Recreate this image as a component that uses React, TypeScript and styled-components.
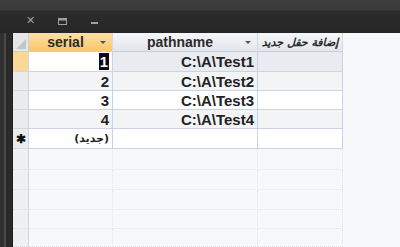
import React from "react";
import styled, { createGlobalStyle } from "styled-components";

const Global = createGlobalStyle`
    html, body {
        margin: 0;
        padding: 0;
        width: 400px;
        height: 247px;
        overflow: hidden;
        background: #f7f8fa;
        font-family: "Liberation Sans", Arial, sans-serif;
    }
`;

const Page = styled.div`
    width: 400px;
    height: 247px;
    display: flex;
    flex-direction: column;
`;

const TitleBar = styled.div`
    height: 33px;
    flex: none;
    background: linear-gradient(#3e3e3e 0, #3a3a3a 10px, #2c2c2c 11px, #262626 100%);
    display: flex;
    align-items: flex-end;
    padding: 0 0 8px 26px;
    box-sizing: border-box;
    gap: 23px;
`;

const Body = styled.div`
    flex: 1;
    display: flex;
    min-height: 0;
`;

const LeftEdge = styled.div`
    width: 13px;
    flex: none;
    background: linear-gradient(
        90deg,
        #303030 0,
        #303030 4px,
        #4a4a4a 4px,
        #4a4a4a 6px,
        #2a2a2a 6px,
        #2a2a2a 12px,
        #1e1e1e 12px
    );
`;

const Sheet = styled.div`
    flex: 1;
    display: grid;
    grid-template-columns: 16px 84px 145px 85px;
    grid-template-rows: 19px 20px 19px 19px 19px 20px 21px 20px 20px 19px 18px;
    align-content: start;
    background: #f7f8fa;
`;

const HeadCell = styled.div<{ $active?: boolean; $arabic?: boolean }>`
    box-sizing: border-box;
    display: flex;
    align-items: center;
    justify-content: center;
    position: relative;
    border-right: 1px solid #d5d9e0;
    border-bottom: 1px solid #c9cdd4;
    background: ${(p) =>
        p.$active
            ? "linear-gradient(#fde0a6, #f8c66c)"
            : "linear-gradient(#f6f7f9, #e2e5ea)"};
    color: #2b2b2b;
    font-weight: bold;
    font-size: ${(p) => (p.$arabic ? "11px" : "14px")};
    font-style: ${(p) => (p.$arabic ? "italic" : "normal")};
    font-family: ${(p) =>
        p.$arabic
            ? '"DejaVu Sans", "Noto Sans", sans-serif'
            : '"Liberation Sans", Arial, sans-serif'};
    padding-right: ${(p) => (p.$arabic ? "0" : "10px")};
`;

const Arrow = styled.span`
    position: absolute;
    right: 6px;
    top: 8px;
    width: 0;
    height: 0;
    border-left: 3px solid transparent;
    border-right: 3px solid transparent;
    border-top: 3px solid #555;
`;

const Corner = styled.div`
    box-sizing: border-box;
    background: #e4e6ea;
    border-right: 1px solid #c9cdd4;
    border-bottom: 1px solid #c9cdd4;
    position: relative;
    &::after {
        content: "";
        position: absolute;
        right: 2px;
        bottom: 2px;
        width: 0;
        height: 0;
        border-left: 10px solid transparent;
        border-bottom: 10px solid #c2c5ca;
    }
`;

const Selector = styled.div<{ $current?: boolean; $ghost?: boolean }>`
    box-sizing: border-box;
    display: flex;
    align-items: center;
    justify-content: center;
    background: ${(p) => (p.$current ? "#fdd796" : p.$ghost ? "#eef0f2" : "#ebecee")};
    border-right: 1px solid #cfd3da;
    border-bottom: 1px ${(p) => (p.$ghost ? "dotted #d9dce1" : "solid #d3d7de")};
    color: #111;
    font-size: 12px;
    font-weight: bold;
`;

const Cell = styled.div<{ $bg: string; $arabic?: boolean }>`
    box-sizing: border-box;
    display: flex;
    align-items: center;
    justify-content: flex-end;
    padding: 0 3px;
    background: ${(p) => p.$bg};
    border-right: 1px solid #c8d4e4;
    border-bottom: 1px solid #c8d4e4;
    color: #222;
    font-weight: bold;
    font-size: ${(p) => (p.$arabic ? "11px" : "15px")};
    font-family: ${(p) =>
        p.$arabic
            ? '"DejaVu Sans", "Noto Sans", sans-serif'
            : '"Liberation Sans", Arial, sans-serif'};
`;

const Selected = styled.span`
    background: #0a0a14;
    color: #fff;
    padding: 0 1px;
    line-height: 17px;
`;

const GhostCell = styled.div<{ $last?: boolean }>`
    border-right: 1px dotted ${(p) => (p.$last ? "#e0e3e8" : "#e4e7eb")};
    border-bottom: 1px dotted #e2e5ea;
    box-sizing: border-box;
`;

const WinIcon = styled.span`
    color: #a0a0a0;
    font-size: 11px;
    line-height: 8px;
    font-weight: bold;
    font-family: "DejaVu Sans", sans-serif;
`;

const rows = [
    { id: "1", path: "C:\\A\\Test1" },
    { id: "2", path: "C:\\A\\Test2" },
    { id: "3", path: "C:\\A\\Test3" },
    { id: "4", path: "C:\\A\\Test4" },
];

export default function App() {
    return (
        <Page>
            <Global />
            <TitleBar>
                <WinIcon>✕</WinIcon>
                <svg width="9" height="7" viewBox="0 0 9 7">
                    <rect x="0.5" y="0.5" width="8" height="6" fill="none" stroke="#a0a0a0" />
                    <rect x="0.5" y="0.5" width="8" height="2" fill="#a0a0a0" />
                </svg>
                <svg width="8" height="3" viewBox="0 0 8 3" style={{ marginLeft: 1 }}>
                    <rect x="0" y="0" width="7" height="2" fill="#a0a0a0" />
                </svg>
            </TitleBar>
            <Body>
                <LeftEdge />
                <Sheet>
                    <Corner />
                    <HeadCell $active>
                        serial
                        <Arrow />
                    </HeadCell>
                    <HeadCell>
                        pathname
                        <Arrow />
                    </HeadCell>
                    <HeadCell $arabic dir="rtl">
                        إضافة حقل جديد
                    </HeadCell>

                    {rows.map((r, i) => {
                        const current = i === 0;
                        const bg = current ? "#e9ebf1" : i % 2 === 1 ? "#f3f4f6" : "#ffffff";
                        return (
                            <React.Fragment key={r.id}>
                                <Selector $current={current} />
                                <Cell $bg={current ? "#ffffff" : bg}>
                                    {current ? <Selected>{r.id}</Selected> : r.id}
                                </Cell>
                                <Cell $bg={bg}>{r.path}</Cell>
                                <Cell $bg={bg} />
                            </React.Fragment>
                        );
                    })}

                    <Selector>✱</Selector>
                    <Cell $bg="#ffffff" $arabic>
                        <span dir="rtl">(جديد)</span>
                    </Cell>
                    <Cell $bg="#ffffff" />
                    <Cell $bg="#ffffff" />

                    {[0, 1, 2, 3, 4].map((k) => (
                        <React.Fragment key={k}>
                            <Selector $ghost />
                            <GhostCell />
                            <GhostCell />
                            <GhostCell $last />
                        </React.Fragment>
                    ))}
                </Sheet>
            </Body>
        </Page>
    );
}
